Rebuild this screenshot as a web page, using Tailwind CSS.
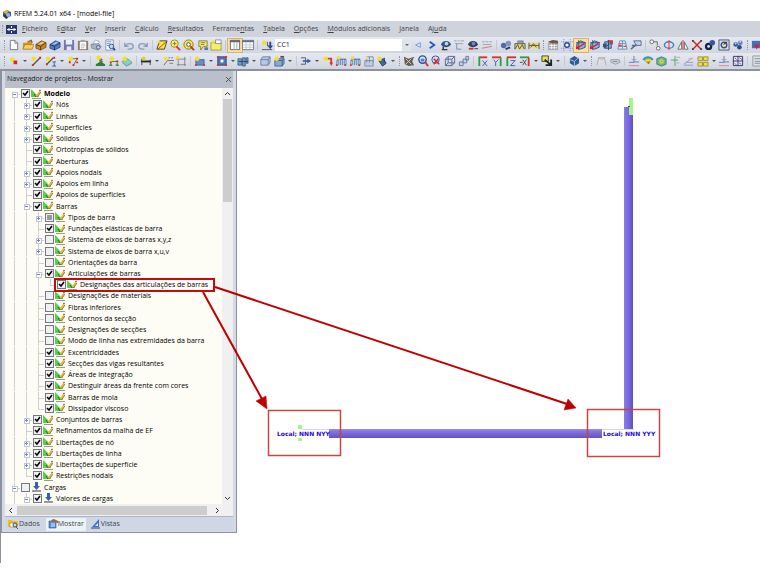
<!DOCTYPE html>
<html lang="pt">
<head>
    <meta charset="UTF-8">
    <meta name="viewport" content="width=device-width, initial-scale=1.0">
    <title>RFEM 5.24.01 x64 - [model-file]</title>
    <script src="https://cdn.jsdelivr.net/npm/@tailwindcss/browser@4"></script>
</head>
<body class="relative flex min-h-screen flex-col overflow-hidden bg-white pt-[7px] font-['Open_Sans','Noto_Sans',sans-serif] text-[7px] text-[#222]">
    <header class="border-b-2 border-[#8d929d]">
        <div class="flex h-[14px] items-center gap-[2px] px-[2px]">
            <svg class="h-[10px] w-[10px]" viewBox="0 0 10 10"><path d="M1 3l4-2 4 2v4L5 9 1 7z" fill="#3f5f9c"/><path d="M1 3l4-2 2 1-3 3z" fill="#dfb52e"/><circle cx="6" cy="6" r="2" fill="#9cb2dc"/><path d="M1 7l2-2 3 4-2 1z" fill="#24355c"/></svg>
            <h1 class="text-[7px] text-black">RFEM 5.24.01 x64 - [model-file]</h1>
        </div>
        <nav class="flex h-4 items-center bg-[#cfd3dc] pl-[2px] text-[#444]">
            <span class="h-2 border-l border-dotted border-[#9298a5]"></span>
            <svg class="mr-[5px] ml-[3px] h-[9px] w-[11px]" viewBox="0 0 11 9"><path d="M0 0h11v9H0z" fill="#26366f"/><path d="M1 4.500h9M3 3v3M8 3v3M5.500 1v2M5.500 6v2" stroke="#fff"/></svg>
            <div id="menu" class="flex gap-[9px]"></div>
        </nav>
        <div id="bar-main" class="flex h-4 items-center bg-linear-to-b from-[#e6e9f0] to-[#d0d5e0] pl-[2px]"></div>
        <div id="bar-tools" class="flex h-4 items-center bg-linear-to-b from-[#e6e9f0] to-[#d0d5e0] pl-[2px]"></div>
    </header>

    <main class="mb-[7px] flex flex-1 items-start border-l border-[#8d929d]">
        <aside class="w-[236px] border border-t-0 border-[#8b91a0] bg-[#d5d9e3] px-[3px] pb-[1px]">
            <div class="flex h-[17px] items-center justify-between bg-[#b9bfcb] px-[2px] text-[#222]">
                <h2>Navegador de projetos - Mostrar</h2>
                <button aria-label="Fechar"><svg class="h-[5px] w-[5px]" viewBox="0 0 5 5"><path d="M0 0l5 5M5 0L0 5" stroke="#555"/></svg></button>
            </div>
            <div class="flex bg-[#fdfdf5]">
                <ul id="tree" class="grid h-[416px] flex-1 auto-rows-fr pl-[3px] text-black"></ul>
                <div class="flex w-[11px] flex-col items-center bg-[#f0f0f0] py-1">
                    <svg class="h-1 w-[5px]" viewBox="0 0 5 4"><path d="M0 3l2.500-2.500L5 3" fill="none" stroke="#333"/></svg>
                    <div class="mt-[3px] h-[103px] w-[9px] bg-[#cdcdcd]"></div>
                    <svg class="mt-auto h-1 w-[5px]" viewBox="0 0 5 4"><path d="M0 1l2.500 2.500L5 1" fill="none" stroke="#333"/></svg>
                </div>
            </div>
            <div class="flex h-[12px] items-center bg-[#f0f0f0] px-1">
                <svg class="h-[5px] w-1" viewBox="0 0 4 5"><path d="M3 0L.5 2.500 3 5" fill="none" stroke="#333"/></svg>
                <div class="ml-1 h-[9px] w-[190px] bg-[#cdcdcd]"></div>
                <svg class="ml-[8px] h-[5px] w-1" viewBox="0 0 4 5"><path d="M1 0l2.500 2.500L1 5" fill="none" stroke="#333"/></svg>
            </div>
            <div class="flex h-[15px] items-center border-t border-[#aeb5c5] bg-[#cfd6e4] px-[3px] text-[#444]">
                <button class="flex items-center">
                    <svg class="h-[10px] w-[11px]" viewBox="0 0 11 10"><path d="M0 1h4l1 1h5v6H0z" fill="#f5bd1a"/><path d="M2 4h5v4H2z" fill="#fff" stroke="#a87b10" stroke-width=".6"/><circle cx="7" cy="6" r="2" fill="#bfe0f7" stroke="#284f90"/><path d="M8 8l2 2" stroke="#284f90"/></svg>
                    Dados
                </button>
                <button class="ml-[6px] flex h-[13px] items-center bg-[#e9f3f8] px-[2px]">
                    <svg class="h-[10px] w-[10px]" viewBox="0 0 10 10"><path d="M1 2h7v7H1z" fill="#5b8fd8" stroke="#285090" stroke-width=".6"/><path d="M3 1l3-1 4 2v2L5 3z" fill="#a0664a"/><path d="M3 5h4M3 7h4" stroke="#dcecff"/></svg>
                    Mostrar
                </button>
                <button class="ml-[5px] flex items-center">
                    <svg class="h-[10px] w-[10px]" viewBox="0 0 10 10"><path d="M1 8L8 0v8z" fill="#3e70d0"/><path d="M4 7l3-3v3z" fill="#e5edfa"/><path d="M0 9h9" stroke="#223f86"/></svg>
                    Vistas
                </button>
            </div>
        </aside>
    </main>

    <!-- model and callouts -->
    <svg class="pointer-events-none absolute top-0 left-0 h-[570px] w-[760px]" viewBox="0 0 760 570">
        <defs>
            <linearGradient id="beam-h" x1="0" y1="0" x2="0" y2="1"><stop offset="0" stop-color="#9a90ee"/><stop offset=".3" stop-color="#8070e0"/><stop offset="1" stop-color="#6453c4"/></linearGradient>
            <linearGradient id="beam-v" x1="0" y1="0" x2="1" y2="0"><stop offset="0" stop-color="#8a7de6"/><stop offset=".5" stop-color="#7a69de"/><stop offset="1" stop-color="#5f50c0"/></linearGradient>
        </defs>
        <path d="M302 429.500h300M602 429.500h32" stroke="#d9d5fa"/>
        <rect x="329" y="429" width="273" height="9" fill="url(#beam-h)"/>
        <rect x="624" y="107" width="9" height="322" fill="url(#beam-v)"/>
        <path d="M629 98h4v17h-4zM298 425h4v4h-4zM298 438h4v3h-4z" fill="#a4f787"/>
        <path d="M628 106.500h2" stroke="#3a4a2a"/>
        <g fill="#2408d8" font-family="DejaVu Sans, sans-serif" font-size="6" font-weight="bold">
            <text x="277" y="436">Local; NNN NYY</text>
            <text x="603" y="436">Local; NNN YYY</text>
        </g>
        <g fill="none" stroke="#c9453f" stroke-width="1.500">
            <rect x="268.500" y="410.500" width="72" height="45"/>
            <rect x="587.500" y="409.500" width="72" height="47"/>
        </g>
        <rect x="55" y="279" width="159" height="12" fill="none" stroke="#c40b10" stroke-width="2"/>
        <path d="M203 292l59 107M215 287l352 117" stroke="#c00000" stroke-width="2"/>
        <path d="M267 409l-11-8 10-5zM576 408l-12 2 4-11z" fill="#c00000" stroke="#c00000" stroke-width=".5"/>
    </svg>

    <script>
        // Underlined access key is marked with _ in front of the letter
        const menuItems = ['_Ficheiro', 'E_ditar', '_Ver', '_Inserir', '_Cálculo', '_Resultados', 'Ferrame_ntas', '_Tabela', '_Opções', '_Módulos adicionais', '_Janela', 'Aj_uda'];

        // Toolbar glyphs, 13 x 13
        const glyphs = {
            page: '<path d="M2.500 1.500h5l3 3v7h-8z" fill="#fff" stroke="#777"/><path d="M7.500 1.500v3h3" fill="none" stroke="#777"/>',
            open: '<path d="M1 4h4l1-2h5v9H1z" fill="#d39a22"/><path d="M3 6h10l-2 5H1z" fill="#f7cf5a" stroke="#8b6412" stroke-width=".6"/><path d="M7 3l3-2 1 3" fill="none" stroke="#456"/>',
            boxOrange: '<path d="M1 6l6-4 5 2v5l-6 3-5-2z" fill="#c98628" stroke="#5d3b12" stroke-width=".7"/><path d="M1 6l5 2 6-4M6 8v4" fill="none" stroke="#573915"/><path d="M3 6l5-3 2 1-4 2z" fill="#ffd27a"/>',
            boxBlue: '<path d="M1 6l6-4 5 2v5l-6 3-5-2z" fill="#4f7fc9" stroke="#1e2f5e" stroke-width=".7"/><path d="M1 6l5 2 6-4M6 8v4" fill="none" stroke="#1e2f5e"/><path d="M3 6l5-3 2 1-4 2z" fill="#a7c8f7"/>',
            save: '<path d="M1 1h11v11H1z" fill="#7675b4"/><path d="M3 1h7v5H3z" fill="#eef"/><path d="M4 8h5v4H4z" fill="#e3e5f0"/>',
            paste: '<path d="M1 2h11v10H1z" fill="#8a7c66"/><path d="M3 3h7v8H3z" fill="#fff"/><path d="M4 1h5v2H4z" fill="#a4a4ac"/><path d="M4 5.500h5M4 7.500h5M4 9.500h4" stroke="#b3bac8"/>',
            print: '<path d="M3 5l3-4 4 2-1 3z" fill="#fff" stroke="#889" stroke-width=".7"/><path d="M1 6l8-1 3 3-3 4-7-2z" fill="#aab1c4" stroke="#636b80" stroke-width=".6"/><circle cx="9" cy="9" r="2" fill="#b8d6ed" stroke="#45618f"/>',
            preview: '<path d="M2 1h8v11H2z" fill="#fff" stroke="#8990a5"/><path d="M3 3h5M3 5h4M3 7h3" stroke="#6b8fcb"/><circle cx="8" cy="8" r="2.500" fill="#b9d9f2" stroke="#2a5090"/><path d="M10 10l2 2" stroke="#2a5090" stroke-width="2"/>',
            undo: '<path d="M2 4v4h4M3 8c1-4 8-4 8 0 0 2-2 3-6 3" fill="none" stroke="#8c9cb9" stroke-width="1.500"/>',
            redo: '<path d="M11 4v4H7M10 8C9 4 2 4 2 8c0 2 2 3 6 3" fill="none" stroke="#8c9cb9" stroke-width="1.500"/>',
            para: '<path d="M4 2h8l-3 9H1z" fill="#f6e93c" stroke="#444"/><path d="M2 11L11 3" stroke="#d22"/><circle cx="3" cy="3" r="1.500" fill="#f5dd30"/>',
            lens: '<circle cx="6" cy="5" r="4" fill="#ffef62" stroke="#9a8812"/><path d="M4 5h4M6 3v4" stroke="#776"/><path d="M8 8l4 4" stroke="#d2392f" stroke-width="2"/>',
            ring: '<circle cx="6" cy="6" r="5" fill="#f4e748" stroke="#8a7a12"/><circle cx="6" cy="6" r="2" fill="#fff" stroke="#445"/><path d="M8 8l4 4" stroke="#b33" stroke-width="2"/>',
            note: '<path d="M2 2h9v6H7l-3 4V8H2z" fill="#fbf26c" stroke="#867d28"/><path d="M4 4h5M4 6h4" stroke="#776"/><path d="M8 9h4v3H8z" fill="#5579b8"/>',
            folder: '<path d="M1 4h11v8H1z" fill="#f9ee67" stroke="#8a7f1c" stroke-width=".7"/><path d="M6 1h6v4H6z" fill="#fff" stroke="#667" stroke-width=".7"/><circle cx="3" cy="3" r="1.500" fill="#f5df2c"/>',
            cols: '<path d="M1.500 1.500h10v10h-10z" fill="#fff" stroke="#666"/><path d="M1 2.500h11" stroke="#666" stroke-width="2"/><path d="M5.500 3v9M8.500 3v9" stroke="#9ba8bd"/>',
            table: '<path d="M.5 1.500h12v10H.5z" fill="#fff" stroke="#778"/><path d="M0 2.500h13" stroke="#66728c" stroke-width="2"/><path d="M1 6.500h11M1 9h11M4.500 3v8M8.500 3v8" stroke="#b6bccb" stroke-width=".8"/>',
            load: '<circle cx="3.500" cy="4" r="2.500" fill="#f5df2c"/><path d="M7 3v5M1 11.500h11" stroke="#555"/><path d="M9 3h2v4h2l-3 4-3-4h2z" fill="#27468e"/>',
            prev: '<path d="M9 4L4 6.500 9 9z" fill="#e6effc" stroke="#6a94dd"/>',
            next: '<path d="M4 3l5 3.500L4 10" fill="none" stroke="#235bc5" stroke-width="2"/>',
            eye: '<path d="M1 6c2-5 9-5 11 0-3 4-8 4-11 0z" fill="#32527d"/><circle cx="7" cy="5" r="2" fill="#b6d5f4"/><path d="M2 11.500h6M3.500 8v3" stroke="#334" stroke-width="1.500"/>',
            eyeRed: '<path d="M1 6c2-5 9-5 11 0-3 4-8 4-11 0z" fill="#3d3c55"/><circle cx="7" cy="5" r="2" fill="#5d8ae0"/><path d="M2 10.500h5" stroke="#d12c2c" stroke-width="2"/><path d="M8 10.500h4" stroke="#334"/>',
            values: '<path d="M1 2h3M5 2h2M8 2h4M2 5h9" stroke="#9aa1af"/><path d="M4 5v6h5" stroke="#7390b9" fill="none"/>',
            dims: '<path d="M1 3h3M5 3h3M9 3h3M2 6h9" stroke="#9aa1af"/><path d="M1 10l11-2" stroke="#d5777a"/>',
            gear: '<circle cx="4" cy="7" r="3" fill="#4d6ba6"/><circle cx="9" cy="5" r="3" fill="#8196bd"/><path d="M6 11l5-2" stroke="#2a3759" stroke-width="2"/>',
            truss: '<path d="M1 5h11v6H1z" fill="#e6dc6b"/><path d="M1 11V5h11v6M1 11l3-5 2 5 3-5 2 5" fill="none" stroke="#555"/><path d="M4 2h6v3H4z" fill="#8da0ba" stroke="#556" stroke-width=".5"/>',
            rail: '<path d="M1 4h11v6H1z" fill="#e6dc6b"/><path d="M1 4v7M12 4v7M1 7h11M3 9l3-4 3 4" fill="none" stroke="#555"/>',
            hand: '<path d="M1 4h11v8H1z" fill="#a8abb3"/><path d="M1 3l5-2 6 1v3H5z" fill="#6e5544"/><path d="M2 7h9M2 9.500h9M5 5v6M8 5v6" stroke="#fff" stroke-width=".8"/>',
            grid: '<path d="M3 0v13M10 0v13M0 3h13M0 10h13" stroke="#7a93cc" stroke-dasharray="1 1"/><circle cx="6.500" cy="6.500" r="2.500" fill="#fff" stroke="#26479c" stroke-width="1.500"/>',
            snap: '<path d="M2 10V5l4-3 5 2v5l-5 2z" fill="#8fb4e2" stroke="#25508c"/><path d="M1 4h11M4 1v11" stroke="#345" stroke-width=".8"/><path d="M2 10l8-5" stroke="#d22" stroke-width="1.500"/><path d="M1 8h3v3H1z" fill="#d22"/>',
            osnap: '<path d="M3 3h7v7H3z" fill="#8ab0dc" stroke="#25508c"/><path d="M7 1v11M2 10l9-7" stroke="#345"/><path d="M6 2h5v4" stroke="#d22" stroke-width="1.500" fill="none"/><path d="M1 5h4v4H1z" fill="#3a4f80"/>',
            mesh: '<path d="M4 2h6l2 9H2z" fill="#dce8f4" stroke="#6f8fae"/><path d="M3 5h8M3 8h8M7 2v9" stroke="#6f8fae"/><path d="M3 7h3M9 8h2" stroke="#d33" stroke-width="1.500"/>',
            plane: '<path d="M4 2h8v5H7z" fill="#c6d2e8" stroke="#556a91"/><path d="M1 11l6-5M2 7h5" stroke="#556a91" stroke-width="1.500"/>',
            move: '<circle cx="3" cy="3" r="2" fill="#fff" stroke="#666"/><circle cx="10" cy="10" r="2" fill="#fff" stroke="#666"/><path d="M5 3h4v4" fill="none" stroke="#666"/>',
            rotate: '<ellipse cx="6.500" cy="6.500" rx="5" ry="3.500" fill="none" stroke="#5079bb" stroke-width="1.500"/><path d="M6.500 1v11" stroke="#d43b3b"/>',
            mirror: '<path d="M5 3v8H1zM8 3v8h4z" fill="#fff" stroke="#666"/><path d="M6.500 1v11" stroke="#d33"/>',
            cross: '<path d="M2 2l9 9M11 2l-9 9" stroke="#d02323" stroke-width="1.500"/><path d="M1 1h2v2H1zM10 1h2v2h-2zM1 10h2v2H1zM10 10h2v2h-2z" fill="#444"/>',
            spheres: '<circle cx="5" cy="8" r="4" fill="#18233f"/><circle cx="9" cy="4" r="3" fill="#3856a0"/><circle cx="5" cy="8" r="1.500" fill="#d7e3ff"/>',
            target: '<path d="M1 1h11v11H1z" fill="#d6dbe5" stroke="#50566a"/><circle cx="6.500" cy="6.500" r="3" fill="#f1e3a4" stroke="#2c4c8f" stroke-width="1.500"/><path d="M6 6l4-3" stroke="#222"/>',
            dots: '<circle cx="4" cy="6" r="2.500" fill="#345a9e"/><circle cx="9" cy="4" r="2.500" fill="#5b7fc1"/><circle cx="8" cy="9" r="2.500" fill="#294983"/><circle cx="4" cy="5" r="1" fill="#cfe0fb"/><circle cx="9" cy="3" r="1" fill="#cfe0fb"/>',
            screen: '<path d="M1 2h12v8H1z" fill="#3c74c2"/><path d="M3 6h7l-4 5z" fill="#d22"/>',
            node: '<circle cx="4.500" cy="5" r="2.500" fill="#f5df2c"/><path d="M6 6h4v4H6z" fill="#d6281f"/>',
            line: '<path d="M3 11L11 3" stroke="#555" stroke-width="1.500"/><circle cx="4" cy="4" r="2.500" fill="#f5df2c"/><path d="M2 10h2v2H2zM10 2h2v2h-2z" fill="#d6281f"/>',
            lineDim: '<path d="M2 10L9 3" stroke="#555" stroke-width="1.500"/><circle cx="3.500" cy="4" r="2.500" fill="#f5df2c"/><path d="M1 9h2v2H1zM9 2h2v2H9z" fill="#d6281f"/><path d="M8 7.500h4M10 8v4M8 12h4" stroke="#2955b5"/>',
            poly: '<path d="M3 8V4h8l-4 7" fill="none" stroke="#666"/><circle cx="4" cy="4" r="2.500" fill="#f5df2c"/><path d="M2 7h2v2H2zM10 3h2v2h-2zM6 10h2v2H6zM10 7h2v2h-2z" fill="#d6281f"/>',
            support: '<path d="M5 4l5 3-3 3z" fill="#3f9d45"/><path d="M2 10l5-3 5 3v2H2z" fill="#2f7d38"/><circle cx="5" cy="3" r="2.500" fill="#f5df2c"/><path d="M7 4h2v2H7z" fill="#d6281f"/>',
            supports: '<path d="M1 12l2-4 2 4zM8 12l2-4 2 4z" fill="#3f9d45"/><path d="M4 7h7" stroke="#666"/><path d="M2 7h2v2H2zM9 6h2v2H9z" fill="#d6281f"/><circle cx="4" cy="4" r="2.500" fill="#f5df2c"/>',
            layer: '<path d="M1 7l6-3 5 4-6 4z" fill="#8ccfb9" stroke="#68a9a0"/><path d="M1 8l5 4 6-3" fill="none" stroke="#6ea0cc"/><circle cx="4" cy="4" r="2.500" fill="#f5df2c"/>',
            beam: '<path d="M1 7h11" stroke="#222" stroke-width="2"/><path d="M2 4v7M11 5v6" stroke="#444"/><circle cx="4" cy="4" r="2" fill="#d9cf25"/>',
            dim: '<path d="M2 11l4-5h7" fill="none" stroke="#666"/><path d="M7 3h2M10 3h2M8 9h4" stroke="#777"/><circle cx="4" cy="4" r="2" fill="#f5df2c"/>',
            frame: '<path d="M3.500 2v10M10.500 2v10M1 4.500h11M2 10.500h10" stroke="#888"/><circle cx="3" cy="3" r="2" fill="#f5df2c"/>',
            surf: '<path d="M2 5h9v6H2z" fill="#5d8fd5" stroke="#294a80" stroke-width=".7"/><circle cx="3.500" cy="4" r="2.500" fill="#f5df2c"/><path d="M1 10h2v2H1zM10 10h2v2h-2z" fill="#d33"/>',
            hole: '<path d="M2 2h9v9H2z" fill="#5379b5" stroke="#28406d"/><path d="M5 5h3v3H5z" fill="#fff"/><path d="M1 1h2v2H1zM10 1h2v2h-2zM1 10h2v2H1zM10 10h2v2h-2z" fill="#d33"/>',
            solid: '<path d="M1 4h4v7H1zM6 3h3v9H6zM10 3h2v6h-2z" fill="#6d9bd0" stroke="#2a4668" stroke-width=".7"/><path d="M2 7h10" stroke="#294567"/>',
            cube: '<path d="M2 5l2-3h8v6l-2 3H2z" fill="#b8c9e2" stroke="#6a80a2"/><path d="M2 5h8l2-3M10 5v6" fill="none" stroke="#6a80a2"/>',
            cubeNew: '<path d="M2 6l2-2h8v5l-2 3H2z" fill="#85a8d6" stroke="#34517f" stroke-width=".8"/><path d="M2 6h8l2-2M10 6v6" fill="none" stroke="#34517f" stroke-width=".8"/><circle cx="4" cy="4" r="2.500" fill="#f5df2c"/><path d="M8 1h4v2H8z" fill="#555"/>',
            flow: '<path d="M1 3h5M1 10h5M6 3v7" stroke="#555" fill="none"/><path d="M3 6.500h6" stroke="#3b6bbb" stroke-width="2"/><path d="M8 4l4 2.500L8 9z" fill="#2d5aa6"/>',
            force: '<path d="M5 4h5v5" fill="none" stroke="#d33b2d" stroke-width="2"/><path d="M8 8h4l-2 4z" fill="#d33b2d"/><circle cx="4" cy="4" r="2.500" fill="#f5df2c"/>',
            forces: '<path d="M2 11V6h2v5M6 11V5h2v6M10 11V5h2v6" fill="none" stroke="#5a80bd"/><path d="M2 4.500h10" stroke="#3964ab"/><path d="M1 10h2v2H1zM10 10h2v2h-2z" fill="#d33b2d"/><circle cx="4" cy="3" r="2" fill="#f5df2c"/>',
            area: '<path d="M2 6h9v6H2z" fill="#bfcbde" stroke="#8090ad"/><path d="M4 2h7v6M7 2v6M4 2v6" fill="none" stroke="#7189b4"/><circle cx="4" cy="3" r="1.500" fill="#eee16a"/>',
            pot: '<path d="M3 6l5-2 3 5-4 3z" fill="#4069a8" stroke="#253c64"/><circle cx="4" cy="4" r="2.500" fill="#f5df2c"/><path d="M9 3v5" stroke="#333"/>',
            select: '<path d="M1 2l5 2 6-2-2 5 2 4-6 1-4-2z" fill="#6a5b4c"/><path d="M3 4l6 6M9 4l-6 6" stroke="#d8d3cb"/>',
            zoomWin: '<circle cx="6" cy="5" r="4" fill="#d4e4f6" stroke="#2c4d9e" stroke-width="1.500"/><path d="M9 8l3 4" stroke="#d33" stroke-width="2"/><path d="M4 4h4v3H4z" fill="#5c7cc0"/>',
            zoomX: '<circle cx="6" cy="5" r="4" fill="#d4e4f6" stroke="#2c4d9e"/><path d="M4 4l6 6M9 4l-5 6" stroke="#d42222" stroke-width="1.500"/>',
            wire: '<path d="M1.500 4.500h7v7h-7zM4.500 1.500h7v7h-7zM1.500 4.500l3-3M8.500 4.500l3-3M8.500 11.500l3-3M1.500 11.500l3-3" fill="none" stroke="#52658e"/>',
            boxes: '<path d="M1.500 7.500h4v4h-4zM5.500 4.500h4v4h-4zM8.500 1.500h3v4h-3z" fill="#c7d2e6" stroke="#66789d"/>',
            axX: '<path d="M2 2.500h9" stroke="#d5342b" stroke-width="2"/><path d="M2.500 2v10" stroke="#28a343" stroke-width="2"/><path d="M6 6l5 6M11 6l-5 6" stroke="#3a5ab5"/>',
            axY: '<path d="M1 2.500h10" stroke="#d5342b" stroke-width="2"/><path d="M10.500 3v9" stroke="#28a343" stroke-width="2"/><path d="M3 5l2 3 3-3M5 8v4" stroke="#3a5ab5" fill="none"/>',
            axZ: '<path d="M2 2.500h10" stroke="#d5342b" stroke-width="2"/><path d="M2.500 3v9" stroke="#28a343" stroke-width="2"/><path d="M6 6h5l-5 5.500h5" fill="none" stroke="#3a5ab5"/>',
            axNeg: '<path d="M1 2.500h10" stroke="#28a343" stroke-width="2"/><path d="M10.500 3v9" stroke="#d5342b" stroke-width="2"/><path d="M4 5l4 6M8 5l-4 6" stroke="#444"/><path d="M1 8h3" stroke="#444"/>',
            render: '<path d="M1 1h7v6H1z" fill="#ece03e" stroke="#444"/><path d="M4 5l7 6M11 5v6H5" fill="none" stroke="#222" stroke-width="2"/>',
            sphere: '<path d="M2 4l5-3 5 3v5l-5 3-5-3z" fill="#305b94"/><path d="M2 5l5 2 4-4M7 7v5" stroke="#9cc5ea" fill="none"/>',
            diag: '<path d="M2 11l2-8h6l2 8" fill="none" stroke="#aaa"/><path d="M4 3l4 2 3-3" fill="none" stroke="#d99"/>',
            pill: '<path d="M2 5h9l1 3-5 2-5-2z" fill="#ced0d6" stroke="#9b9ea8"/><path d="M4 7h5" stroke="#888"/>',
            react: '<path d="M6.500 1v7H1M6 7.500h6" fill="none" stroke="#597dc2"/><path d="M4 5h5M1 11.500h11" stroke="#d88"/>',
            rainbow: '<path d="M1 5c3-4 8-4 11 0l-5 5z" fill="#4fbf62"/><path d="M3 6c2-2 6-2 8 0l-4 4z" fill="#f2df3c"/><path d="M5 7h4l-2 3z" fill="#e34a33"/><path d="M1 5c3-4 8-4 11 0" fill="none" stroke="#3f7fe0" stroke-width="1.500"/>',
            cubeFem: '<path d="M2 4l5-2 5 2v6l-5 2-5-2z" fill="#64bf72" stroke="#4573a8"/><circle cx="7" cy="7" r="2.500" fill="#c8e04a"/><circle cx="7" cy="7" r="1" fill="#e38a33"/>',
            plus: '<path d="M6.500 1v11M2 5.500h8" stroke="#53a668"/><path d="M8 2.500h4M8 8.500h3" stroke="#aaa"/>',
            slope: '<path d="M1 10l9-7M3 8h8M1 11h10" stroke="#8b9cc6" fill="none"/><path d="M6 4h5" stroke="#d9a0a0"/>',
            tiles: '<path d="M1 2h5v4H1zM7 2h5v4H7zM1 8h5v4H1zM7 8h5v4H7z" fill="#f1dc45" stroke="#8c8130" stroke-width=".8"/>',
            quad: '<path d="M1.500 1.500h10v10h-10z" fill="#dde5f6" stroke="#26396f"/><path d="M6.500 1v11M1 6.500h11" stroke="#26396f"/><path d="M3 3l2 2M8 3l3 2M3 9l2 2M8 9l2 1" stroke="#d33"/>',
            report: '<path d="M2 1h11v11H2z" fill="#ddd" stroke="#999"/><path d="M4 4h8M4 7h8M4 9h8" stroke="#79a"/>',
        };

        // 'v' is a drop-down arrow, '*' in front marks a pressed button
        const mainBar = [
            'grip', ['w-[110px]', 'page open boxOrange boxBlue save paste print preview'],
            'sep', ['w-[28px]', 'undo redo'],
            'sep', ['w-[68px]', 'para lens ring note folder'],
            'sep', ['w-[27px]', '*cols table'],
            'sep', ['w-[13px]', 'load'],
            'combo', ['w-[83px]', 'prev next eye values eyeRed dims'],
            'sep', ['w-[42px]', 'gear truss rail'],
            'grip', ['w-[97px]', 'hand grid *snap snap osnap mesh plane'],
            'sep', ['w-[97px]', 'move rotate mirror cross spheres target dots'],
            'grip', ['w-[14px]', 'screen'],
        ];
        const toolsBar = [
            'grip', ['w-[81px]', 'node v line lineDim v poly v'],
            'sep', ['w-[41px]', 'support supports layer'],
            'sep', ['w-[49px]', 'beam v dim frame'],
            'sep', ['w-[101px]', 'surf v hole v solid v cube cubeNew v'],
            'sep', ['w-[98px]', 'flow v force forces forces area pot v'],
            'grip', ['w-[69px]', 'select zoomWin zoomX wire boxes'],
            'sep', ['w-[86px]', 'axX axY axZ axNeg v render v'],
            'sep', ['w-[22px]', 'sphere v'],
            'grip', ['w-[28px]', 'diag pill'],
            'sep', ['w-[118px]', 'react rainbow cubeFem plus slope tiles v react quad'],
            'sep', ['w-[14px]', 'report'],
        ];

        function toolButton(name) {
            if (name === 'v') {
                return '<button class="flex w-2 shrink-0 justify-center" aria-label="Mais"><svg class="h-[2px] w-[4px]" viewBox="0 0 4 2"><path d="M0 0h4L2 2z" fill="#555"/></svg></button>';
            }
            const pressed = name.startsWith('*');
            const key = name.replace('*', '');
            const look = pressed ? 'bg-[#fde0a0] outline outline-[#d3b27a]' : '';
            return `<button class="flex h-[13px] min-w-0 flex-1 items-center justify-center ${look}" aria-label="${key}"><svg class="h-[12px] w-[12px] shrink-0" viewBox="0 0 13 13">${glyphs[key]}</svg></button>`;
        }

        function toolbar(parts) {
            return parts.map(part => {
                if (part === 'grip') return '<span class="mx-[2px] h-[10px] shrink-0 border-l border-dotted border-[#8e95a5]"></span>';
                if (part === 'sep') return '<span class="mx-[2px] h-[10px] w-px shrink-0 bg-[#c3c8d3]"></span>';
                if (part === 'combo') {
                    return `<div class="grid w-[138px] shrink-0 items-center pl-[2px]">
                        <select aria-label="Caso de carga" class="col-start-1 row-start-1 h-3 appearance-none bg-white pl-[2px] text-[7px] leading-3"><option>CC1</option></select>
                        <svg class="pointer-events-none col-start-1 row-start-1 h-3 w-[9px] justify-self-end bg-[#dfe3eb]" viewBox="0 0 9 12"><path d="M3 5h4L5 7z" fill="#666"/></svg>
                    </div>`;
                }
                return `<div class="flex shrink-0 items-center ${part[0]}">${part[1].split(' ').map(toolButton).join('')}</div>`;
            }).join('');
        }

        // [level, expander, state, label]; state: 1 checked, 0 empty, 2 partial
        const rows = [
            [0, '-', 1, 'Modelo'],
            [1, '+', 1, 'Nós'], [1, '+', 1, 'Linhas'], [1, '+', 1, 'Superfícies'], [1, '+', 1, 'Sólidos'],
            [1, '', 1, 'Ortotropias de sólidos'], [1, '', 1, 'Aberturas'], [1, '+', 1, 'Apoios nodais'],
            [1, '+', 1, 'Apoios em linha'], [1, '', 1, 'Apoios de superfícies'], [1, '-', 1, 'Barras'],
            [2, '+', 2, 'Tipos de barra'], [2, '', 1, 'Fundações elásticas de barra'],
            [2, '+', 0, 'Sistema de eixos de barras x,y,z'], [2, '+', 0, 'Sistema de eixos de barra x,u,v'],
            [2, '', 0, 'Orientações da barra'], [2, '-', 1, 'Articulações de barras'],
            [3, '', 1, 'Designações das articulações de barras'],
            [2, '', 0, 'Designações de materiais'], [2, '', 0, 'Fibras inferiores'], [2, '', 0, 'Contornos da secção'],
            [2, '', 0, 'Designações de secções'], [2, '', 0, 'Modo de linha nas extremidades da barra'],
            [2, '', 1, 'Excentricidades'], [2, '', 1, 'Secções das vigas resultantes'], [2, '', 1, 'Áreas de integração'],
            [2, '', 1, 'Destinguir áreas da frente com cores'], [2, '', 1, 'Barras de mola'], [2, '', 1, 'Dissipador viscoso'],
            [1, '+', 1, 'Conjuntos de barras'], [1, '', 1, 'Refinamentos da malha de EF'], [1, '+', 1, 'Libertações de nó'],
            [1, '+', 1, 'Libertações de linha'], [1, '+', 1, 'Libertações de superfície'], [1, '', 1, 'Restrições nodais'],
            [0, '-', 0, 'Cargas'], [1, '-', 1, 'Valores de cargas'],
        ];
        const pencil = '<path d="M1 9h9v1H1z" fill="#999"/><path d="M0 0l8 8H0z" fill="#55cf4c"/><path d="M3 5l2 3 1-1" fill="none" stroke="#3d5a2c"/><path d="M5.500 7.500L9 2.500" stroke="#e8bc28" stroke-width="2"/><path d="M6.500 8L10 3" stroke="#5d4a1c" stroke-width=".7"/><path d="M8.500 2l1-1" stroke="#a33b3b" stroke-width="1.500"/>';
        const loads = '<path d="M4 0h3v4h2L5.500 8 2 4h2z" fill="#3b5bb5"/><path d="M1 9h9" stroke="#777" stroke-width="1.500"/>';

        // True when another row of this level follows before the branch closes
        function continues(index, level) {
            for (const row of rows.slice(index + 1)) {
                if (row[0] < level) return false;
                if (row[0] === level) return true;
            }
            return level === 0;
        }

        function guides(index) {
            const [level, expander] = rows[index];
            let html = '';
            for (let l = 0; l <= level; l++) {
                let lines = '';
                if (continues(index, l)) lines += `<rect x="6" y="${index > 0 ? 0 : 6}" width="1" height="100%"/>`;
                if (l === level) {
                    if (index > 0) lines += '<rect x="6" width="1" height="6"/>';
                    lines += '<rect x="6" y="6" width="6" height="1"/>';
                    if (expander) {
                        lines += '<rect x="4" y="4" width="5" height="5" fill="#fff" stroke="#c0c4cc"/><path d="M5 6.500h3" stroke="#6d88c4"/>';
                        if (expander === '+') lines += '<path d="M6.500 5v3" stroke="#6d88c4"/>';
                    }
                }
                html += `<svg class="h-full w-3 shrink-0" fill="#d0d0d0" shape-rendering="crispEdges">${lines}</svg>`;
            }
            return html;
        }

        function treeRow([level, expander, state, label], index) {
            const mark = ['', '<path d="M2 4l2 2 3-4" fill="none" stroke="#000" stroke-width="1.500"/>', '<path d="M2 2h5v5H2z" fill="#999"/>'][state];
            const art = index > 34 ? loads : pencil;
            return `<li class="flex min-h-0 items-center">
                ${guides(index)}
                <label class="flex items-center leading-none whitespace-nowrap ${index === 0 ? 'font-bold' : ''}">
                    <span class="mr-px ml-px grid">
                        <input type="checkbox" ${state === 1 ? 'checked' : ''} class="col-start-1 row-start-1 h-[9px] w-[9px] appearance-none border border-[#77777c] bg-[#eef0f6]">
                        <svg class="pointer-events-none col-start-1 row-start-1 h-[9px] w-[9px]" viewBox="0 0 9 9">${mark}</svg>
                    </span>
                    <svg class="mr-[3px] h-[10px] w-[10px]" viewBox="0 0 10 10">${art}</svg>
                    ${label}
                </label>
            </li>`;
        }

        document.getElementById('menu').innerHTML = menuItems
            .map(item => `<button>${item.replace(/_(.)/, '<u>$1</u>')}</button>`).join('');
        document.getElementById('bar-main').innerHTML = toolbar(mainBar);
        document.getElementById('bar-tools').innerHTML = toolbar(toolsBar);
        document.getElementById('tree').innerHTML = rows.map(treeRow).join('');
    </script>
</body>
</html>
